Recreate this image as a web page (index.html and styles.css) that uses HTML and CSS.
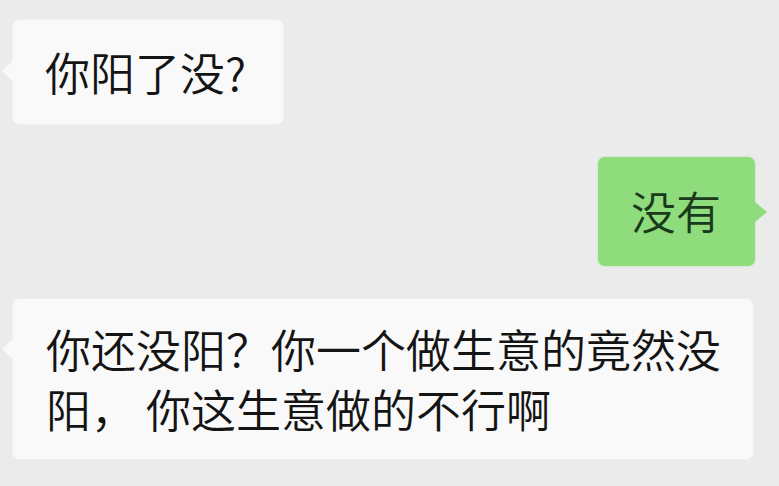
FILE: index.html
```html
<!DOCTYPE html>
<html lang="zh-CN">
<head>
  <meta charset="UTF-8" />
  <title>聊天</title>
  <link rel="stylesheet" href="styles.css">
</head>
<body>
  <div id="chat">
    <div class="row left">
      <div class="bubble in">你阳了没?</div>
    </div>
    <div class="row right">
      <div class="bubble out">没有</div>
    </div>
    <div class="row left">
      <div class="bubble in wide">你还没阳？你一个做生意的竟然没阳， 你这生意做的不行啊</div>
    </div>
  </div>
</body>
</html>
```

FILE: styles.css
```css
* {
  margin: 0;
  padding: 0;
  box-sizing: border-box;
}

body, html {
  height: 100%;
  background: #ebebeb;
  font-family: "Noto Sans CJK SC", "Noto Sans", sans-serif;
  color: #141414;
}

#chat {
  display: flex;
  flex-direction: column;
  gap: 33px;
  padding: 20px 24px 0 13px;
}

.row {
  display: flex;
}

.row.left {
  justify-content: flex-start;
}

.row.right {
  justify-content: flex-end;
}

.bubble {
  position: relative;
  font-size: 45px;
  font-weight: 350;
  line-height: 60px;
  border-radius: 7px;
  text-spacing-trim: space-all;
}

.bubble.in {
  background: #f9f9f9;
  padding: 22px 37px 22px 32px;
  box-shadow: 0 0 2px rgba(255,255,255,0.9);
}

.bubble.in::before {
  content: "";
  position: absolute;
  left: -11px;
  top: 41px;
  border-top: 10px solid transparent;
  border-bottom: 10px solid transparent;
  border-right: 11px solid #f9f9f9;
}

.bubble.wide {
  width: 740px;
  padding: 20px 28px 20px 33px;
}

.bubble.wide::before {
  top: 40px;
}

.bubble.out {
  background: #8edc7b;
  color: #1a3a1b;
  padding: 24px 34px 25px 33px;
  box-shadow: 0 0 2px rgba(160,230,140,0.8);
}

.bubble.out::after {
  content: "";
  position: absolute;
  right: -12px;
  top: 45px;
  border-top: 10px solid transparent;
  border-bottom: 10px solid transparent;
  border-left: 12px solid #8edc7b;
}
```
